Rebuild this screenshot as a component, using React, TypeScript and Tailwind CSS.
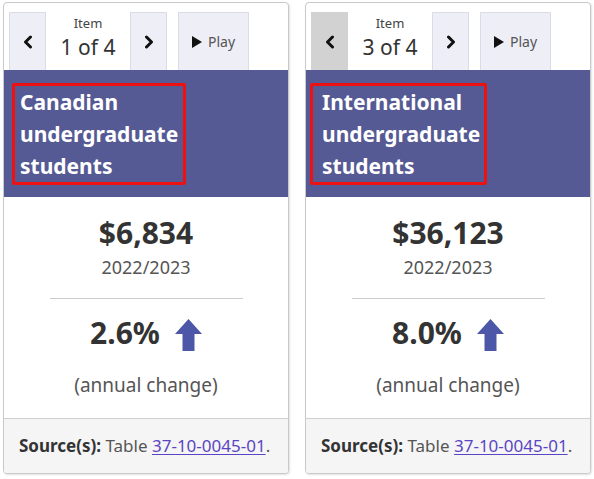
import React from "react";

type CardProps = {
  index: string;
  title: string[];
  amount: string;
  change: string;
  prevActive?: boolean;
  boxMl: string;
  boxPl: string;
  boxPr: string;
};

function Chevron({ dir }: { dir: "left" | "right" }) {
  return (
    <svg width="12" height="14" viewBox="0 0 12 14" aria-hidden="true">
      {dir === "left" ? (
        <polyline points="8.5,2 3.5,7 8.5,12" fill="none" stroke="#111" strokeWidth="3" strokeLinecap="round" strokeLinejoin="round" />
      ) : (
        <polyline points="3.5,2 8.5,7 3.5,12" fill="none" stroke="#111" strokeWidth="3" strokeLinecap="round" strokeLinejoin="round" />
      )}
    </svg>
  );
}

function UpArrow() {
  return (
    <svg width="27" height="32" viewBox="0 0 27 32" aria-hidden="true">
      <polygon points="13.5,0 27,15 19.5,15 19.5,32 7.5,32 7.5,15 0,15" fill="#4c58a7" />
    </svg>
  );
}

function Card({ index, title, amount, change, prevActive, boxMl, boxPl, boxPr }: CardProps) {
  return (
    <div className="w-[286px] border border-[#c9c9c9] rounded-[4px] overflow-hidden bg-white shadow-[1px_1px_2px_rgba(0,0,0,0.12)] flex flex-col">
      {/* nav */}
      <div className="flex pt-[9px] pl-[5px] h-[67px] items-stretch">
        <div
          className={
            "w-[37px] flex items-center justify-center border border-b-0 " +
            (prevActive ? "bg-[#d2d2d2] border-[#d2d2d2]" : "bg-[#eeeef7] border-[#dcdce8]")
          }
        >
          <Chevron dir="left" />
        </div>
        <div className="w-[84px] flex flex-col items-center">
          <div className="text-[13px] leading-[20px] text-[#444] mt-[1px]">Item</div>
          <div className="text-[21px] leading-[28px] text-[#333]">{index}</div>
        </div>
        <div className="w-[37px] flex items-center justify-center bg-[#eeeef7] border border-b-0 border-[#dcdce8]">
          <Chevron dir="right" />
        </div>
        <div className="w-[71px] ml-[11px] flex items-center justify-center gap-[6px] bg-[#eeeef7] border border-b-0 border-[#dcdce8]">
          <svg width="10" height="12" viewBox="0 0 10 12" aria-hidden="true">
            <polygon points="0,0 10,6 0,12" fill="#111" />
          </svg>
          <span className="text-[14px] leading-[20px] text-[#555]">Play</span>
        </div>
      </div>
      {/* header */}
      <div className="bg-[#565a94] h-[127px] pt-[13px]">
        <div
          className={"w-fit border-[3px] border-[#ee1111] rounded-[2px] text-white font-bold text-[21px] leading-[32px] " + boxMl + " " + boxPl + " " + boxPr}
        >
          {title.map((t) => (
            <div key={t}>{t}</div>
          ))}
        </div>
      </div>
      {/* body */}
      <div className="flex flex-col items-center pt-[18px] h-[221px]">
        <div className="text-[30px] leading-[36px] font-bold text-[#333]">{amount}</div>
        <div className="text-[18px] leading-[26px] text-[#555] mt-[3px]">2022/2023</div>
        <div className="w-[193px] h-px bg-[#cccccc] mt-[18px]" />
        <div className="flex items-center gap-[15px] mt-[16px] h-[36px]">
          <span className="text-[30px] leading-[36px] font-bold text-[#333]">{change}</span>
          <span className="mt-[4px] flex">
            <UpArrow />
          </span>
        </div>
        <div className="text-[19px] leading-[26px] text-[#555] mt-[21px]">(annual change)</div>
      </div>
      {/* footer */}
      <div className="border-t border-[#cfcfcf] bg-[#f5f5f5] flex-1 flex items-center pl-[15px] text-[17px] text-[#555]">
        <span>
          <span className="font-bold text-[#333]">Source(s):</span> Table{" "}
          <span className="text-[#5a45c4] underline underline-offset-2">37-10-0045-01</span>.
        </span>
      </div>
    </div>
  );
}

export default function App() {
  return (
    <div
      className="w-[594px] h-[479px] bg-white flex gap-[16px] pl-[3px] pt-[2px]"
      style={{ fontFamily: '"Noto Sans", "Open Sans", sans-serif' }}
    >
      <div className="h-[472px] flex">
        <Card
          index="1 of 4"
          title={["Canadian", "undergraduate", "students"]}
          amount="$6,834"
          change="2.6%"
          boxMl="ml-[8px]"
          boxPl="pl-[5px]"
          boxPr="pr-[5px]"
        />
      </div>
      <div className="h-[472px] flex">
        <Card
          index="3 of 4"
          title={["International", "undergraduate", "students"]}
          amount="$36,123"
          change="8.0%"
          prevActive
          boxMl="ml-[4px]"
          boxPl="pl-[9px]"
          boxPr="pr-[4px]"
        />
      </div>
    </div>
  );
}
